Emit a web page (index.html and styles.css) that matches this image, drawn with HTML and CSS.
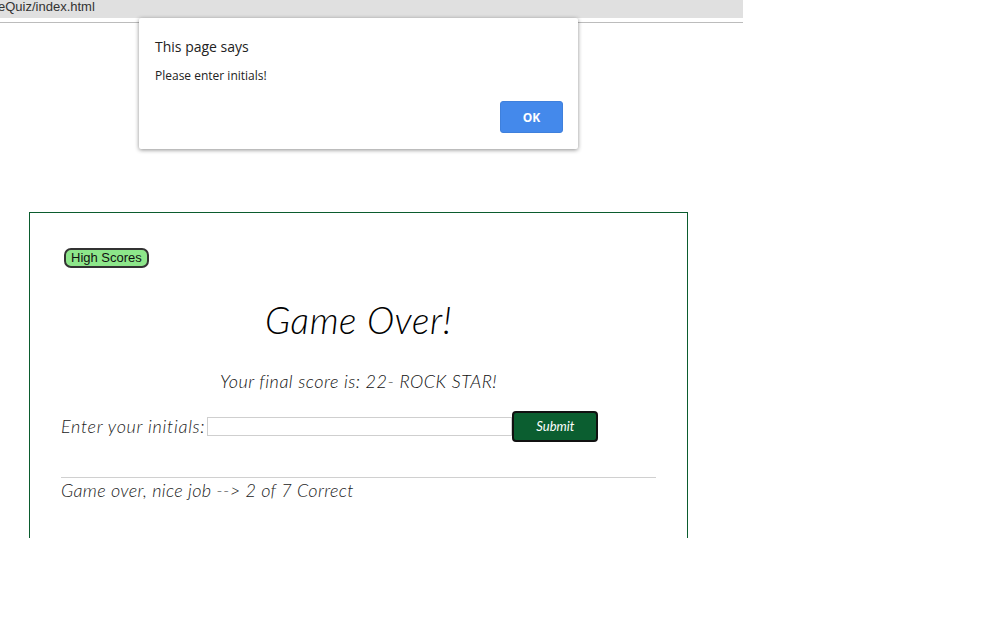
FILE: index.html
```html
<!DOCTYPE html>
<html>
<head>
<meta charset="utf-8">
<link rel="stylesheet" href="styles.css">
</head>
<body>
<div class="chrome">
  <div class="address">eQuiz/index.html</div>
  <div class="rule"></div>
</div>
<main class="quiz">
  <div class="top"><button class="hs">High Scores</button></div>
  <h1 class="title">Game Over!</h1>
  <p class="score">Your final score is: 22- ROCK STAR!</p>
  <div class="entry">
    <label class="lbl">Enter your initials:</label>
    <input class="initials" type="text">
    <button class="submit">Submit</button>
  </div>
  <hr class="sep">
  <p class="result">Game over, nice job --&gt; 2 of 7 Correct</p>
</main>
<div class="dialog">
  <div class="d-title">This page says</div>
  <div class="d-msg">Please enter initials!</div>
  <div class="d-actions"><button class="ok">OK</button></div>
</div>
</body>
</html>
```
FILE: styles.css
```css
html, body { margin: 0; padding: 0; background: #fff; }
body { width: 1008px; height: 630px; overflow: hidden; position: relative; font-family: "Lato", "Open Sans", sans-serif; }
.chrome { width: 743px; }
.address { height: 18px; background: #e0e0e0; font-family: "Liberation Sans", Arial, sans-serif; font-size: 13px; color: #333; line-height: 13px; text-indent: -2px; overflow: hidden; }
.rule { height: 4px; background: #fff; border-bottom: 1px solid #bcbcbc; }
.quiz { margin: 189px 0 0 29px; width: 659px; height: 326px; border: 1px solid #0b5c2e; border-bottom: none; padding: 0 31px; box-sizing: border-box; }
.top { padding-top: 33px; padding-left: 3px; height: 20px; }
.hs { font-family: "Liberation Sans", Arial, sans-serif; font-size: 13px; background: #8de68a; border: 2px solid #333; border-radius: 7px; padding: 0 5px; height: 20px; line-height: 15px; color: #111; }
.title { margin: 32px 0 0; text-align: center; font-weight: 300; font-style: italic; font-size: 37px; line-height: 44px; color: #000; letter-spacing: 0.6px; }
.score { margin: 27px 0 0; text-align: center; font-weight: 300; font-style: italic; font-size: 18px; line-height: 24px; color: #111; letter-spacing: 0.5px; }
.entry { display: flex; align-items: center; margin-top: 18px; height: 30px; }
.lbl { font-weight: 300; font-style: italic; font-size: 18px; color: #222; margin-right: 2px; letter-spacing: 0.7px; }
.initials { width: 305px; height: 19px; box-sizing: border-box; border: 1px solid #cfcfcf; margin: 0; padding: 0; }
.submit { width: 86px; height: 31px; background: #0b5e30; color: #fff; border: 2px solid #111; border-radius: 4px; font-family: inherit; font-style: italic; font-weight: 400; font-size: 13px; }
.sep { margin: 36px 0 0; border: none; border-top: 1px solid #d0d0d0; }
.result { margin: 1px 0 0; font-weight: 300; font-style: italic; font-size: 18px; line-height: 22px; color: #222; letter-spacing: 0.35px; }
.dialog { position: absolute; left: 139px; top: 18px; width: 439px; height: 131px; background: #fff; border-radius: 2px; box-shadow: 0 1px 4px rgba(0,0,0,0.45); box-sizing: border-box; padding: 20px 15px 0 16px; font-family: "Open Sans", "Noto Sans", sans-serif; }
.d-title { font-size: 14px; color: #222; line-height: 18px; }
.d-msg { font-size: 12px; color: #222; margin-top: 12px; line-height: 16px; }
.d-actions { display: flex; justify-content: flex-end; margin-top: 17px; }
.ok { width: 63px; height: 32px; background: #4489eb; border: 1px solid #3f80dc; border-radius: 3px; color: #fff; font-family: "Open Sans", sans-serif; font-weight: 700; font-size: 12px; }
```
